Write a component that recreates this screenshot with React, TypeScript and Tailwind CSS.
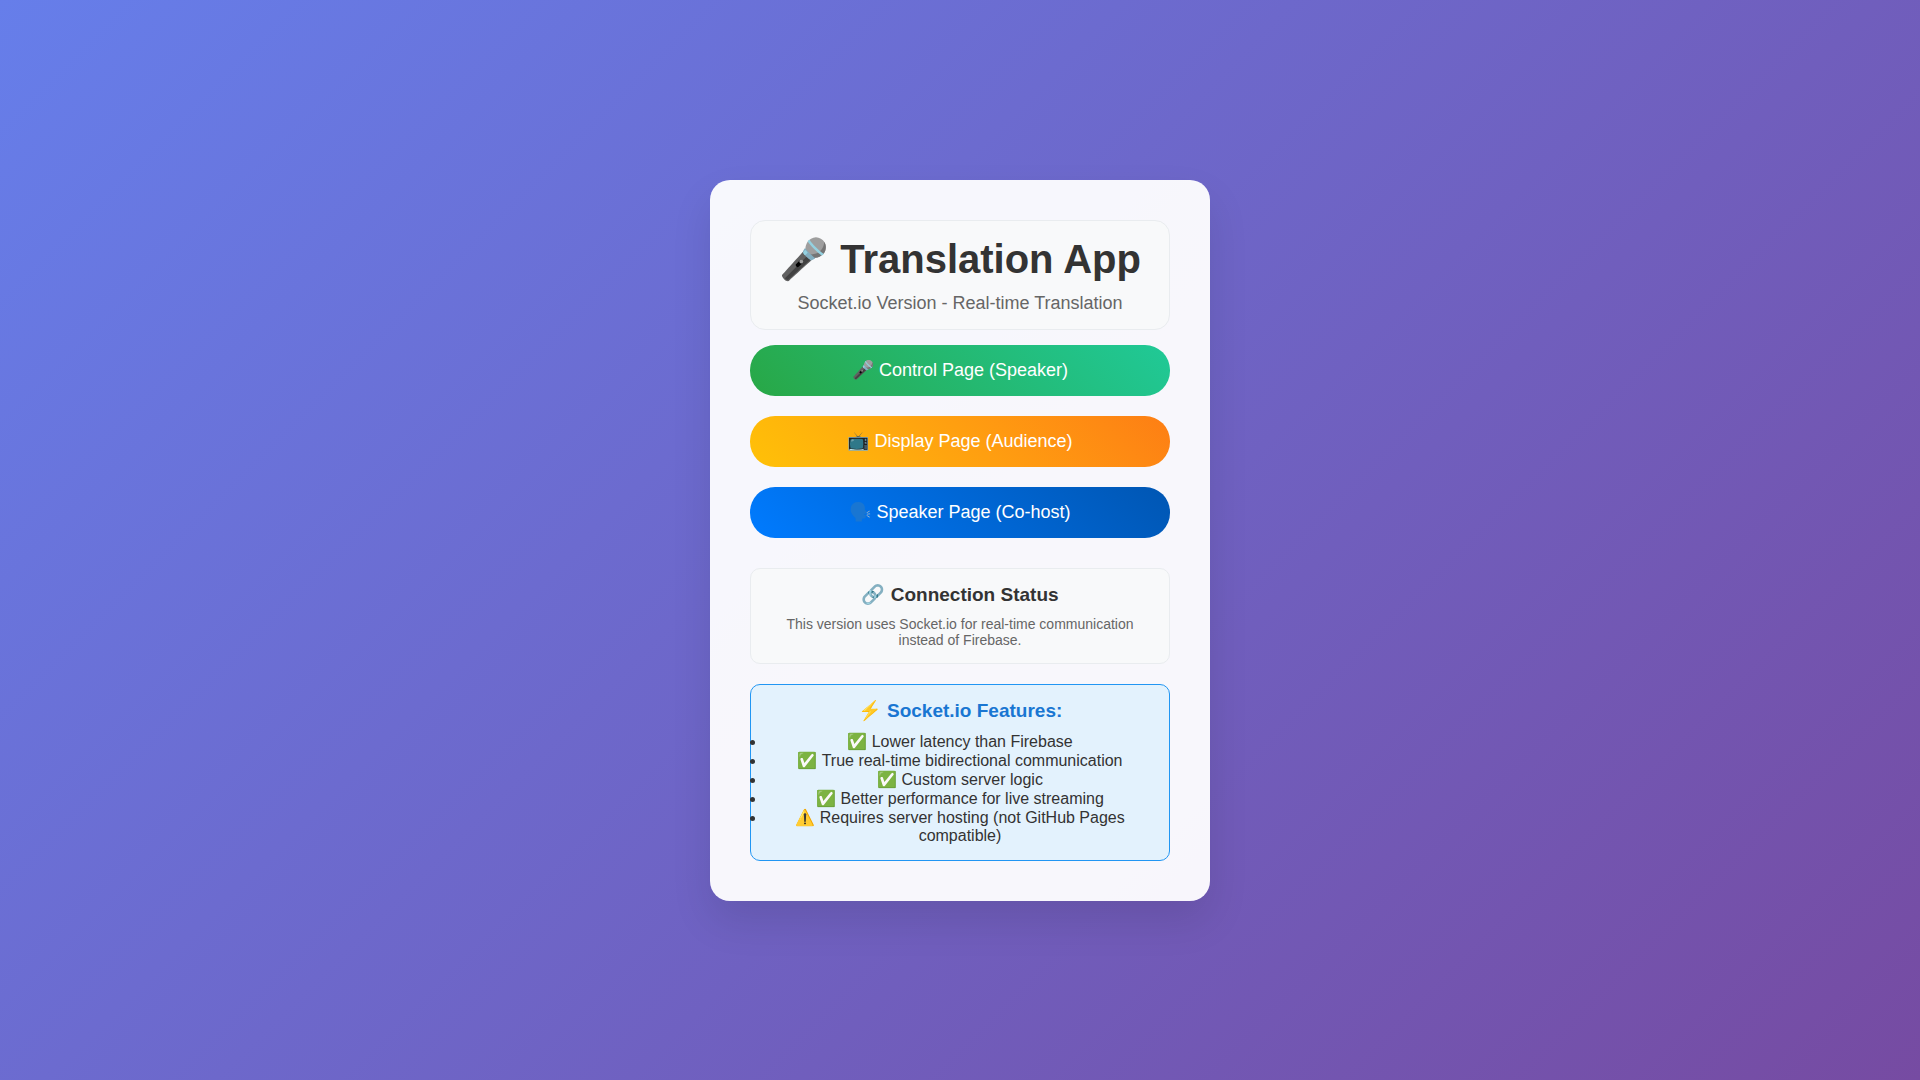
const pages = [
  { label: "🎤 Control Page (Speaker)", href: "#control", tone: "from-[#28a745] to-[#20c997]" },
  { label: "📺 Display Page (Audience)", href: "#display", tone: "from-[#ffc107] to-[#fd7e14]" },
  { label: "🗣️ Speaker Page (Co-host)", href: "#speaker", tone: "from-[#007bff] to-[#0056b3]" },
];

const features = [
  "✅ Lower latency than Firebase",
  "✅ True real-time bidirectional communication",
  "✅ Custom server logic",
  "✅ Better performance for live streaming",
  "⚠️ Requires server hosting (not GitHub Pages compatible)",
];

export default function App() {
  return (
    <div className="flex min-h-screen items-center justify-center bg-linear-[135deg,#667eea_0%,#764ba2_100%] font-['Liberation_Sans',Arial,sans-serif] text-[#333]">
      <main className="w-full max-w-[500px] rounded-[20px] bg-white/95 p-10 text-center shadow-[0_20px_40px_rgba(0,0,0,0.1)]">
        <header className="mb-[15px] rounded-[15px] border border-[#e9ecef] bg-[#f8f9fa] px-5 py-[15px]">
          <h1 className="mb-2.5 text-[40px] leading-[47px] font-bold">🎤 Translation App</h1>
          <p className="text-lg leading-[21px] text-[#666]">Socket.io Version - Real-time Translation</p>
        </header>
        <nav className="flex flex-col gap-5">
          {pages.map((page) => (
            <a
              key={page.href}
              href={page.href}
              className={`rounded-[25px] bg-linear-45 px-8 py-[15px] text-lg leading-[21px] text-white ${page.tone}`}
            >
              {page.label}
            </a>
          ))}
        </nav>
        <section className="mt-[30px] rounded-[10px] border border-[#e9ecef] bg-[#f8f9fa] p-[15px]">
          <h2 className="mb-2.5 text-[19px] leading-[22px] font-bold">🔗 Connection Status</h2>
          <p className="text-sm leading-4 text-[#666]">
            This version uses Socket.io for real-time communication instead of Firebase.
          </p>
        </section>
        <section className="mt-5 rounded-[10px] border border-[#2196f3] bg-[#e3f2fd] p-[15px]">
          <h2 className="mb-2.5 text-[19px] leading-[22px] font-bold text-[#1976d2]">⚡ Socket.io Features:</h2>
          <ul className="list-disc text-base leading-[normal]">
            {features.map((feature) => (
              <li key={feature}>{feature}</li>
            ))}
          </ul>
        </section>
      </main>
    </div>
  );
}
